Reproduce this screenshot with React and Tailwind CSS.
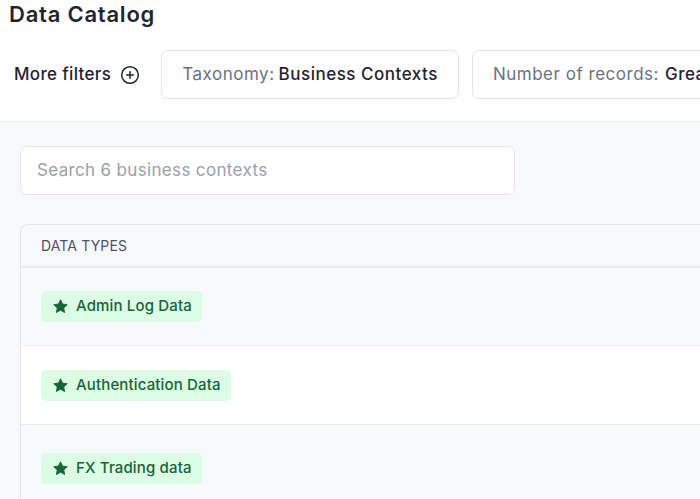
import { CirclePlus } from "lucide-react";

const rows = [
  { name: "Admin Log Data", h: "h-[78px]" },
  { name: "Authentication Data", h: "h-[79px]" },
  { name: "FX Trading data", h: "h-[88px]" },
];

function Star() {
  return (
    <svg viewBox="0 0 24 24" className="w-[17px] h-[17px] shrink-0" fill="#166534">
      <path
        d="M12 2.5l2.9 6.1 6.6.8-4.9 4.6 1.3 6.6L12 17.3l-5.9 3.3 1.3-6.6-4.9-4.6 6.6-.8z"
        stroke="#166534"
        strokeWidth="1.2"
        strokeLinejoin="round"
      />
    </svg>
  );
}

export default function App() {
  return (
    <div
      className="w-[700px] h-[499px] overflow-hidden bg-[#f8f9fb] text-[#1f2430]"
      style={{ fontFamily: "Inter, 'Noto Sans', sans-serif" }}
    >
      {/* header */}
      <div className="bg-white border-b border-[#eceef2] h-[122px]">
        <h1 className="pl-[9px] pt-[1px] text-[22px] leading-[26px] font-semibold tracking-[0.035em]">
          Data Catalog
        </h1>
        <div className="flex items-center mt-[23px] pl-[14px] whitespace-nowrap">
          <button className="flex items-center gap-[9px] text-[17px] font-medium tracking-[0.02em]">
            More filters
            <CirclePlus size={20} strokeWidth={1.8} />
          </button>
          <div className="ml-[21px] h-[49px] flex items-center px-[20px] border border-[#e3e5ea] rounded-[7px] bg-white text-[17px] tracking-[0.03em]">
            <span className="text-[#6b7280]">Taxonomy:</span>
            <span className="ml-[4px] font-medium">Business Contexts</span>
          </div>
          <div className="ml-[13px] h-[49px] flex items-center px-[20px] border border-[#e3e5ea] rounded-[7px] bg-white text-[17px] tracking-[0.03em]">
            <span className="text-[#6b7280]">Number of records:</span>
            <span className="ml-[6px] font-medium">Greater than 1000</span>
          </div>
        </div>
      </div>

      {/* body */}
      <div className="pl-[20px]">
        <div className="mt-[24px] w-[495px] h-[49px] flex items-center px-[16px] bg-white border border-[#e3e5ea] rounded-[7px]">
          <span className="text-[17px] text-[#9aa0ab] tracking-[0.02em]">Search 6 business contexts</span>
        </div>

        <div className="mt-[29px] border-l border-t border-[#e3e5ea] rounded-tl-[8px]">
          <div className="h-[43px] flex items-center pl-[20px] border-b-2 border-[#eaecf0] text-[14px] text-[#4b5263] tracking-[0.01em]">
            DATA TYPES
          </div>
          {rows.map((r, i) => (
            <div
              key={r.name}
              className={`${r.h} flex items-center pl-[20px] border-b border-[#eaecf0] ${
                i % 2 === 1 ? "bg-white" : "bg-[#f8f9fb]"
              }`}
            >
              <span className="flex items-center gap-[7px] h-[31px] pl-[11px] pr-[10px] rounded-[5px] bg-[#dcfce6] text-[#166534] text-[15px] font-medium tracking-[0.01em]">
                <Star />
                {r.name}
              </span>
            </div>
          ))}
        </div>
      </div>
    </div>
  );
}
